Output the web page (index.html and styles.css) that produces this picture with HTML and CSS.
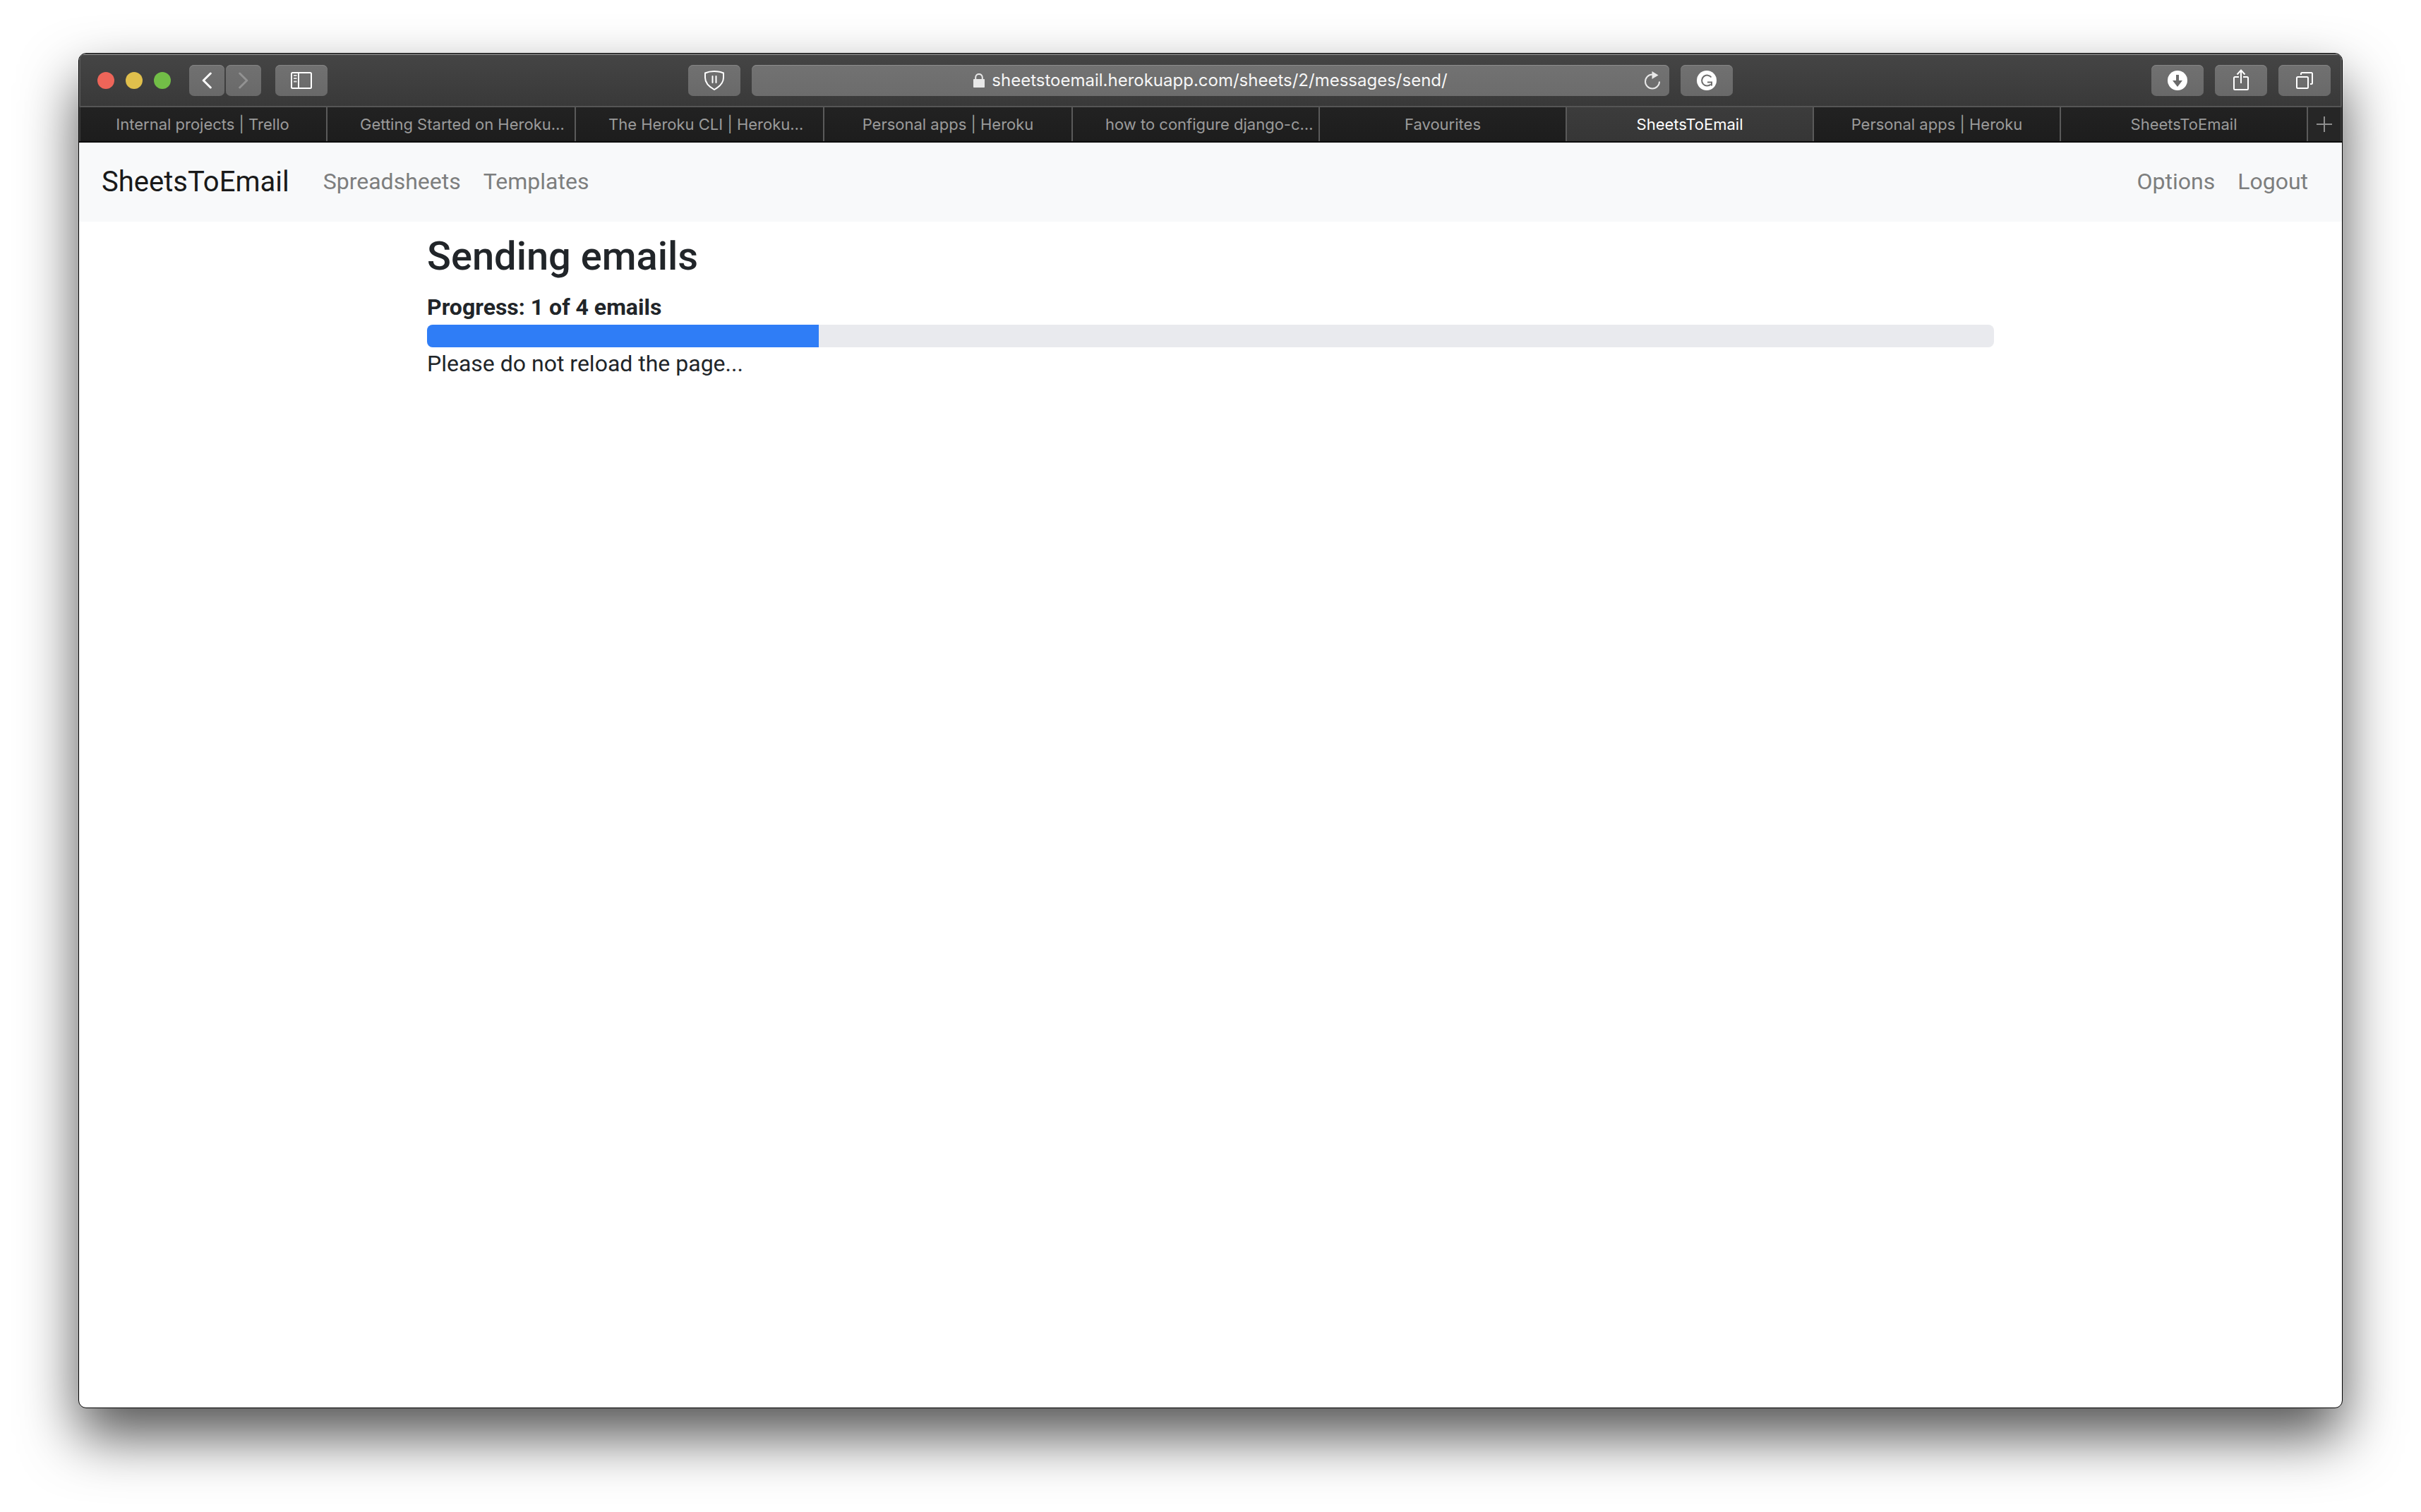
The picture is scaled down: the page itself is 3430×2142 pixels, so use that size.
FILE: index.html
```html
<!DOCTYPE html>
<html lang="en">
<head>
<meta charset="utf-8">
<meta name="viewport" content="width=device-width, initial-scale=1">
<title>SheetsToEmail</title>
<link rel="stylesheet" href="styles.css">
</head>
<body>
<div class="window">
  <header class="toolbar">
    <div class="toolbar-left">
      <div class="lights">
        <button class="light light-close" aria-label="Close"></button>
        <button class="light light-minimise" aria-label="Minimise"></button>
        <button class="light light-zoom" aria-label="Zoom"></button>
      </div>
      <div class="history">
        <button class="tool tool-narrow" aria-label="Back">
          <svg width="14" height="24" viewBox="0 0 14 24" fill="none" stroke="#fff" stroke-width="3" stroke-linecap="round" stroke-linejoin="round"><path d="M12.3 2 2.2 12l10.1 10"/></svg>
        </button>
        <button class="tool tool-narrow" aria-label="Forward">
          <svg width="14" height="24" viewBox="0 0 14 24" fill="none" stroke="#929292" stroke-width="3" stroke-linecap="round" stroke-linejoin="round"><path d="M1.7 2l10.1 10L1.7 22"/></svg>
        </button>
      </div>
      <button class="tool" aria-label="Show sidebar">
        <svg width="30" height="24" viewBox="0 0 30 24" fill="none" stroke="#fff" stroke-width="2"><rect x="1" y="1" width="28" height="22" rx="1.5"/><path d="M11 1v22"/><path d="M4 5h4.500M4 9h4.500M4 13.500h4.500" stroke="#ddd"/></svg>
      </button>
    </div>
    <div class="toolbar-center">
      <button class="tool" aria-label="Content blocker">
        <svg width="28" height="28" viewBox="0 0 28 28" fill="none" stroke="#fff" stroke-width="2" stroke-linejoin="round"><path d="M1 3.500C5 1.700 9.500 1 14 1s9 .7 13 2.500v6.500c0 7-5 12.500-13 17C6 22.500 1 17 1 10z"/><path d="M11.500 8v9M16.500 8v9" stroke-linecap="round"/></svg>
      </button>
      <div class="address">
        <svg class="lock" width="16" height="20" viewBox="0 0 16 20"><path d="M3.200 9V5.700a4.800 4.800 0 0 1 9.600 0V9" fill="none" stroke="#e8e8e8" stroke-width="2"/><rect y="8" width="16" height="12" rx=".8" fill="#e8e8e8"/></svg>
        <input class="url" type="text" aria-label="Address" value="sheetstoemail.herokuapp.com/sheets/2/messages/send/" spellcheck="false">
        <button class="reload" aria-label="Reload">
          <svg width="24" height="28" viewBox="0 0 24 28"><path d="M12 5.500A10 10 0 1 0 22 15.500" fill="none" stroke="#e8e8e8" stroke-width="2"/><path d="M11.500 1 20.500 6.500 11.500 12z" fill="#e8e8e8"/></svg>
        </button>
      </div>
      <button class="tool" aria-label="Grammarly">
        <svg width="28" height="28" viewBox="0 0 28 28" fill="none"><circle cx="14" cy="14" r="14" fill="#fff"/><path d="M20.500 9.500A7.500 7.500 0 1 0 19.800 19.500" stroke="#6e6e6e" stroke-width="2"/><path d="M15 16.500h6v5" stroke="#6e6e6e" stroke-width="2"/></svg>
      </button>
    </div>
    <div class="toolbar-right">
      <button class="tool" aria-label="Downloads">
        <svg width="28" height="28" viewBox="0 0 28 28"><circle cx="14" cy="14" r="14" fill="#fff"/><path d="M12 6h4v8h5l-7 9-7-9h5z" fill="#6b6b6b"/></svg>
      </button>
      <button class="tool" aria-label="Share">
        <svg width="22" height="32" viewBox="0 0 22 32" fill="none" stroke="#fff" stroke-width="2"><path d="M8 11H2.500A1.500 1.500 0 0 0 1 12.500v15A1.500 1.500 0 0 0 2.500 29h17a1.500 1.500 0 0 0 1.500-1.500v-15a1.500 1.500 0 0 0-1.500-1.500H14"/><path d="M11 20V1.500M5.500 7.500 11 1.500l5.500 6"/></svg>
      </button>
      <button class="tool" aria-label="Show all tabs">
        <svg width="24" height="24" viewBox="0 0 24 24" fill="none" stroke="#fff" stroke-width="2"><rect x="1" y="7" width="16" height="16" rx="1.500"/><path d="M7 4V2.500A1.500 1.500 0 0 1 8.500 1h13A1.500 1.500 0 0 1 23 2.500v13a1.500 1.500 0 0 1-1.500 1.500H20"/></svg>
      </button>
    </div>
  </header>

  <div class="tabs" role="tablist">
    <button class="tab tab-first" role="tab">Internal projects | Trello</button>
    <button class="tab tab-first tab-long" role="tab">Getting Started on Heroku…</button>
    <button class="tab tab-first tab-long" role="tab">The Heroku CLI | Heroku…</button>
    <button class="tab tab-first" role="tab">Personal apps | Heroku</button>
    <button class="tab tab-long" role="tab">how to configure django-c…</button>
    <button class="tab" role="tab">Favourites</button>
    <button class="tab tab-active" role="tab" aria-selected="true">SheetsToEmail</button>
    <button class="tab" role="tab">Personal apps | Heroku</button>
    <button class="tab" role="tab">SheetsToEmail</button>
    <button class="tab-new" aria-label="New tab">
      <svg width="22" height="22" viewBox="0 0 22 22" stroke="#8e8e8e" stroke-width="2"><path d="M11 0v22M0 11h22"/></svg>
    </button>
  </div>

  <nav class="navbar">
    <a class="brand" href="#">SheetsToEmail</a>
    <a class="nav-link" href="#">Spreadsheets</a>
    <a class="nav-link" href="#">Templates</a>
    <a class="nav-link nav-end" href="#">Options</a>
    <a class="nav-link" href="#">Logout</a>
  </nav>

  <main class="container">
    <h1 class="title">Sending emails</h1>
    <label class="progress-label" for="progress">Progress: 1 of 4 emails</label>
    <progress class="progress" id="progress" value="1" max="4"></progress>
    <p class="note">Please do not reload the page...</p>
  </main>
</div>
</body>
</html>
```
FILE: styles.css
```css
* {
  box-sizing: border-box;
}

body {
  display: flex;
  flex-direction: column;
  min-height: 100vh;
  margin: 0;
  padding: 75px 111px 147px;
  background: #fff;
  color: #212529;
  font-family: Roboto, "Liberation Sans", sans-serif;
  font-size: 32px;
  line-height: 46px;
}

button,
input {
  margin: 0;
  padding: 0;
  border: 0;
  background: none;
  font-family: Inter, "Liberation Sans", sans-serif;
}

svg {
  display: block;
}

/* Browser window */
.window {
  flex: 1;
  overflow: hidden;
  border: 1px solid #000;
  border-radius: 11px;
  background: #fff;
  box-shadow: 0 40px 80px rgba(0, 0, 0, 0.67);
}

/* Toolbar */
.toolbar {
  display: grid;
  grid-template-columns: 1fr minmax(0, 1480px) 1fr;
  align-items: center;
  height: 76px;
  padding: 2px 16px 0;
  border-bottom: 2px solid #555;
  background: linear-gradient(#454545, #393939);
  box-shadow: inset 0 2px #757575, inset 2px 0 #595959, inset -2px 0 #595959;
}

.toolbar-left,
.toolbar-center,
.toolbar-right,
.lights,
.history {
  display: flex;
  align-items: center;
}

.toolbar-left {
  padding-left: 10px;
}

.toolbar-center,
.toolbar-right {
  gap: 16px;
}

.toolbar-right {
  justify-content: flex-end;
}

.lights {
  gap: 16px;
  margin-right: 26px;
}

.light {
  width: 24px;
  height: 24px;
  border-radius: 50%;
}

.light-close {
  background: #ed6559;
}

.light-minimise {
  background: #e0bf4c;
}

.light-zoom {
  background: #72be47;
}

.history {
  gap: 2px;
  margin-right: 20px;
}

.tool {
  display: flex;
  flex: none;
  align-items: center;
  justify-content: center;
  width: 74px;
  height: 44px;
  border-radius: 7px;
  background: linear-gradient(#717171, #696969);
  box-shadow: inset 0 1px #858585;
}

.tool-narrow {
  width: 50px;
}

.address {
  display: flex;
  flex: 1;
  align-items: center;
  gap: 10px;
  height: 44px;
  min-width: 0;
  border-radius: 7px;
  background: linear-gradient(#727272, #6c6c6c);
  box-shadow: inset 0 1px #8d8d8d;
}

/* Balances the reload button, so that the address stays centred */
.address::before {
  flex: 1;
  padding-left: 12px;
  content: "";
}

.url {
  field-sizing: content;
  color: #f6f6f6;
  font-size: 24px;
  line-height: 32px;
}

.reload {
  display: flex;
  flex: 1;
  justify-content: flex-end;
  padding-right: 12px;
}

/* Tab strip */
.tabs {
  display: flex;
  height: 50px;
  border-bottom: 2px solid #0c0c0c;
  background: linear-gradient(#222, #1d1d1d);
  box-shadow: inset 2px 0 #3a3a3a, inset -2px 0 #3a3a3a;
}

.tab {
  flex: 350 350 0;
  min-width: 0;
  overflow: hidden;
  border-right: 2px solid #5a5a5a;
  color: #9b9b9b;
  font-size: 22px;
  line-height: 48px;
  text-align: center;
  white-space: nowrap;
}

.tab-first {
  flex-grow: 352;
}

.tab-long {
  text-align: left;
  text-indent: 46px;
}

.tab-active {
  background: linear-gradient(#3c3c3c, #363636);
  color: #fff;
}

.tab-new {
  display: flex;
  flex: none;
  align-items: center;
  justify-content: center;
  width: 48px;
  padding-right: 2px;
  background: #262626;
  box-shadow: inset -2px 0 #3a3a3a;
}

/* Site navigation */
.navbar {
  display: flex;
  align-items: center;
  padding: 16px 32px;
  background: #f8f9fa;
}

.brand {
  margin-right: 32px;
  color: #191919;
  font-size: 40px;
  line-height: 80px;
  text-decoration: none;
}

.nav-link {
  padding: 16px 16px 18px;
  color: #7d7e7e;
  text-decoration: none;
}

.nav-end {
  margin-left: auto;
}

/* Page content */
.container {
  max-width: 2280px;
  margin: 0 auto;
  padding: 16px 30px;
}

.title {
  margin: 0 0 16px;
  font-size: 56px;
  font-weight: 500;
  line-height: 66px;
}

.progress-label {
  display: block;
  padding-bottom: 2px;
  font-weight: 700;
}

.progress {
  display: block;
  width: 100%;
  height: 32px;
  overflow: hidden;
  border: 0;
  border-radius: 8px;
  background: #e9eaee;
  appearance: none;
}

.progress::-webkit-progress-bar {
  background: #e9eaee;
}

.progress::-webkit-progress-value {
  background: #2f7df6;
}

.note {
  margin: 0;
}
```
